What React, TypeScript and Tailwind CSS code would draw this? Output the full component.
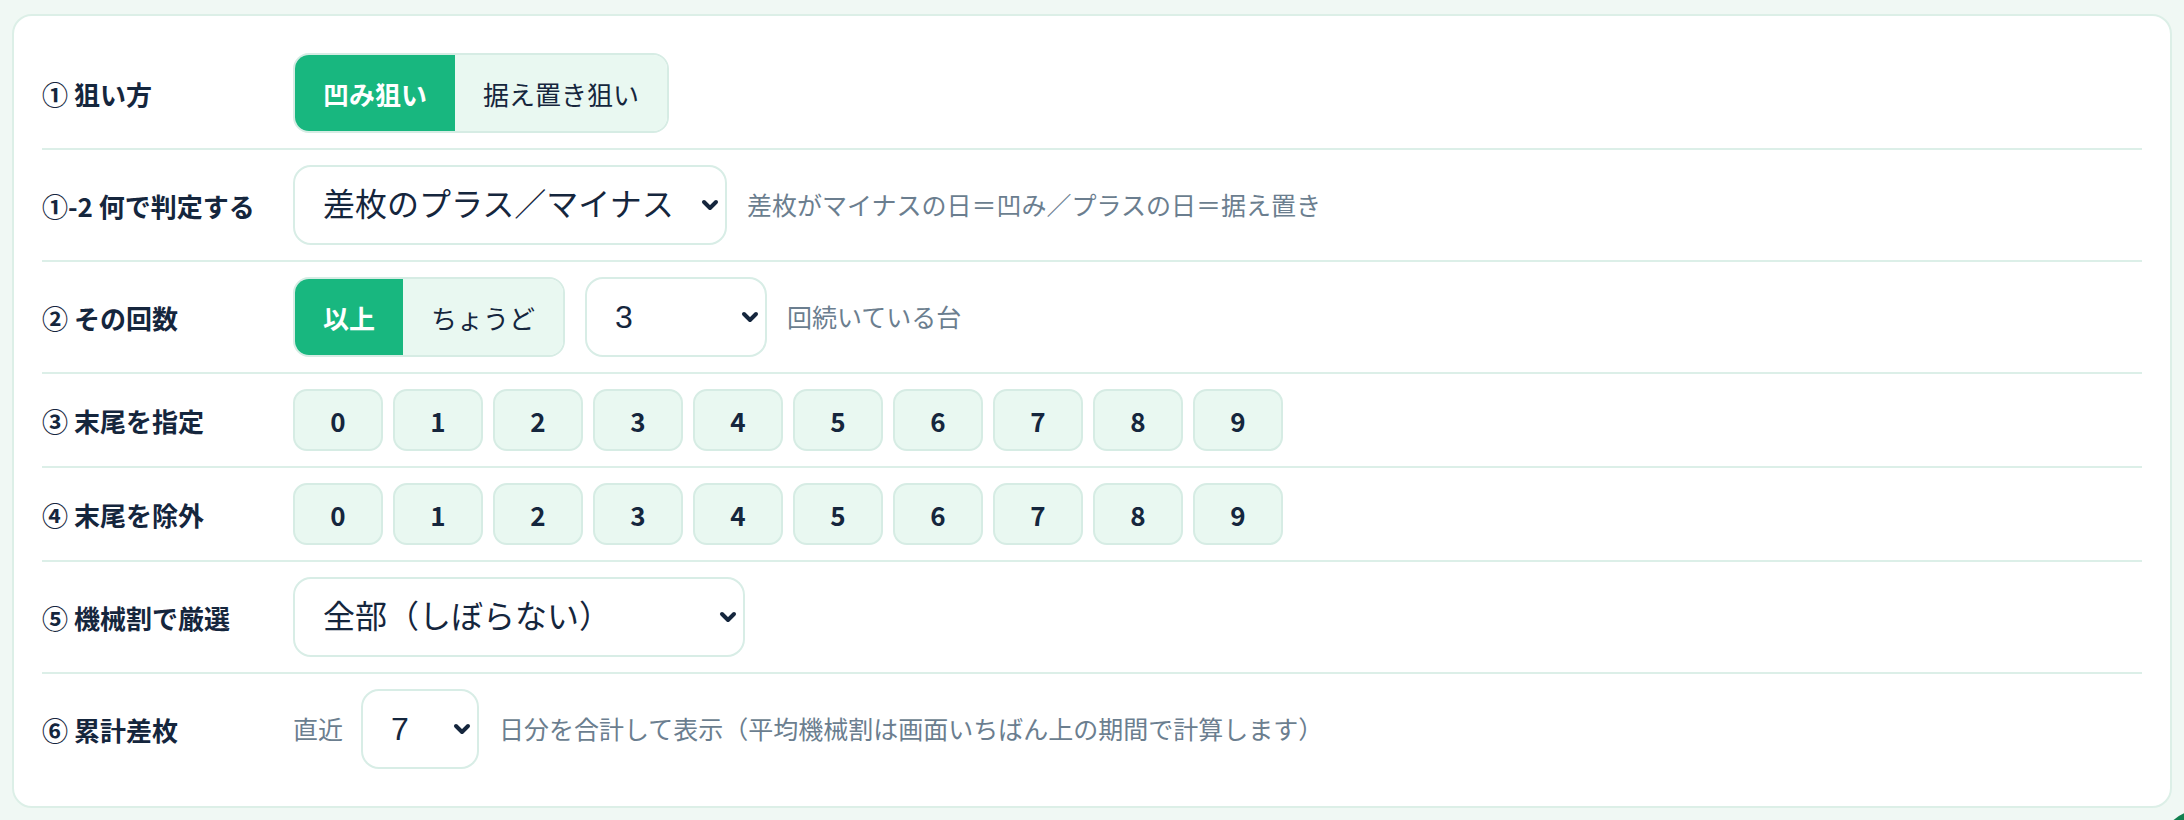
import { useState } from 'react';

const FONT = { fontFamily: '"Noto Sans CJK JP", "Noto Sans", sans-serif' };
const SELECT_FONT = { fontFamily: '"Liberation Sans", "Noto Sans CJK JP", sans-serif' };

function Chevron() {
  return (
    <svg className="pointer-events-none absolute right-[8px] top-1/2 -translate-y-1/2" width="18" height="12" viewBox="0 0 18 12" fill="none">
      <path d="M3 3l6 6 6-6" stroke="#15263d" strokeWidth="4" strokeLinecap="round" strokeLinejoin="round" />
    </svg>
  );
}

function Select({ value, options, width }: { value: string; options: string[]; width: string }) {
  const [v, setV] = useState(value);
  return (
    <div className={`relative shrink-0 ${width}`}>
      <select
        value={v}
        onChange={(e) => setV(e.target.value)}
        style={SELECT_FONT}
        className="h-[80px] w-full appearance-none rounded-[18px] border-2 border-[#d8ede6] bg-white pl-[28px] pr-[34px] text-[32px] text-[#15263d] outline-none"
      >
        {options.map((o) => <option key={o} value={o}>{o}</option>)}
      </select>
      <Chevron />
    </div>
  );
}

function Segmented({ items }: { items: string[] }) {
  const [active, setActive] = useState(0);
  return (
    <div className="flex h-[80px] shrink-0 overflow-hidden rounded-[16px] border-2 border-[#d6ece4]">
      {items.map((it, i) => (
        <button
          key={it}
          onClick={() => setActive(i)}
          className={i === active
            ? 'bg-[#18b77f] px-[28px] text-[26px] font-bold text-white'
            : 'bg-[#e9f8f1] px-[28px] text-[26px] text-[#15263d]'}
        >
          {it}
        </button>
      ))}
    </div>
  );
}

function Digits() {
  const [picked, setPicked] = useState<number[]>([]);
  return (
    <div className="flex gap-[10px]">
      {[0, 1, 2, 3, 4, 5, 6, 7, 8, 9].map((d) => (
        <button
          key={d}
          onClick={() => setPicked((p) => (p.includes(d) ? p.filter((x) => x !== d) : [...p, d]))}
          className={picked.includes(d)
            ? 'h-[62px] w-[90px] rounded-[14px] border-2 border-[#18b77f] bg-[#18b77f] text-[26px] font-bold text-white'
            : 'h-[62px] w-[90px] rounded-[14px] border-2 border-[#d6ece4] bg-[#e9f8f1] text-[26px] font-bold text-[#15263d]'}
        >
          {d}
        </button>
      ))}
    </div>
  );
}

function Row({ label, children, first }: { label: string; children: React.ReactNode; first?: boolean }) {
  return (
    <div className={`grid grid-cols-[251px_1fr] items-center py-[15px] ${first ? '' : 'border-t-2 border-[#dcefe8]'}`}>
      <div className="text-[26px] font-bold text-[#15263d]">{label}</div>
      <div className="flex items-center gap-[20px]">{children}</div>
    </div>
  );
}

export default function App() {
  return (
    <div style={FONT} className="relative h-[820px] overflow-hidden bg-[#f0f8f4] px-[12px] pt-[14px]">
      <div className="rounded-[20px] border-2 border-[#dcefe7] bg-white px-[28px] py-[22px]">
        <Row label="① 狙い方" first>
          <Segmented items={['凹み狙い', '据え置き狙い']} />
        </Row>

        <Row label="①-2 何で判定する">
          <Select value="差枚のプラス／マイナス" options={['差枚のプラス／マイナス', '機械割']} width="w-[434px]" />
          <span className="text-[25px] text-[#6b7e8f]">差枚がマイナスの日＝凹み／プラスの日＝据え置き</span>
        </Row>

        <Row label="② その回数">
          <Segmented items={['以上', 'ちょうど']} />
          <Select value="3" options={['1', '2', '3', '4', '5', '6', '7']} width="w-[182px]" />
          <span className="text-[25px] text-[#6b7e8f]">回続いている台</span>
        </Row>

        <Row label="③ 末尾を指定">
          <Digits />
        </Row>

        <Row label="④ 末尾を除外">
          <Digits />
        </Row>

        <Row label="⑤ 機械割で厳選">
          <Select value="全部（しぼらない）" options={['全部（しぼらない）', '100%以上', '105%以上']} width="w-[452px]" />
        </Row>

        <Row label="⑥ 累計差枚">
          <span className="-mr-[2px] text-[25px] text-[#6b7e8f]">直近</span>
          <Select value="7" options={['3', '5', '7', '14', '30']} width="w-[118px]" />
          <span className="text-[25px] text-[#6b7e8f]">日分を合計して表示（平均機械割は画面いちばん上の期間で計算します）</span>
        </Row>
      </div>

      <div className="absolute bottom-[-70px] right-[-56px] h-[80px] w-[80px] rounded-full bg-[#12804f]" />
    </div>
  );
}
